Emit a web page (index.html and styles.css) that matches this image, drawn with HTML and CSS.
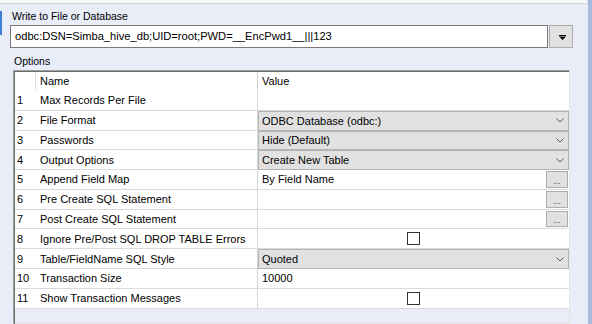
FILE: index.html
```html
<!DOCTYPE html>
<html lang="en">
<head>
    <meta charset="UTF-8">
    <title>Write to File or Database</title>
    <link rel="stylesheet" href="styles.css">
</head>
<body>
<div class="window">
    <div class="main">
        <div class="top-band"></div>

        <section class="field">
            <div class="caption">Write to File or Database</div>
            <div class="conn-row">
                <div class="conn-input">odbc:DSN=Simba_hive_db;UID=root;PWD=__EncPwd1__|||123</div>
                <div class="drop-btn">
                    <svg width="7" height="5" viewBox="0 0 7 5"><rect x="0" y="0" width="7" height="1" fill="#000"/><polygon points="0,1.5 7,1.5 3.5,5" fill="#000"/></svg>
                </div>
            </div>
        </section>

        <div class="caption options-caption">Options</div>

        <div class="grid">
            <div class="grid-body">
                <div class="grid-row head">
                    <div class="num"></div>
                    <div class="name">Name</div>
                    <div class="value">Value</div>
                </div>

                <div class="grid-row">
                    <div class="num">1</div>
                    <div class="name">Max Records Per File</div>
                    <div class="value"></div>
                </div>
                <div class="grid-row">
                    <div class="num">2</div>
                    <div class="name">File Format</div>
                    <div class="value select">ODBC Database (odbc:)
                        <svg class="chev" width="8" height="5" viewBox="0 0 8 5"><polyline points="0.5,0.5 4,4 7.5,0.5" fill="none" stroke="#555" stroke-width="1"/></svg>
                    </div>
                </div>
                <div class="grid-row">
                    <div class="num">3</div>
                    <div class="name">Passwords</div>
                    <div class="value select">Hide (Default)
                        <svg class="chev" width="8" height="5" viewBox="0 0 8 5"><polyline points="0.5,0.5 4,4 7.5,0.5" fill="none" stroke="#555" stroke-width="1"/></svg>
                    </div>
                </div>
                <div class="grid-row">
                    <div class="num">4</div>
                    <div class="name">Output Options</div>
                    <div class="value select">Create New Table
                        <svg class="chev" width="8" height="5" viewBox="0 0 8 5"><polyline points="0.5,0.5 4,4 7.5,0.5" fill="none" stroke="#555" stroke-width="1"/></svg>
                    </div>
                </div>
                <div class="grid-row">
                    <div class="num">5</div>
                    <div class="name">Append Field Map</div>
                    <div class="value">By Field Name<span class="dots">...</span></div>
                </div>
                <div class="grid-row">
                    <div class="num">6</div>
                    <div class="name">Pre Create SQL Statement</div>
                    <div class="value"><span class="dots">...</span></div>
                </div>
                <div class="grid-row">
                    <div class="num">7</div>
                    <div class="name">Post Create SQL Statement</div>
                    <div class="value"><span class="dots">...</span></div>
                </div>
                <div class="grid-row">
                    <div class="num">8</div>
                    <div class="name">Ignore Pre/Post SQL DROP TABLE Errors</div>
                    <div class="value check"><span class="box"></span></div>
                </div>
                <div class="grid-row">
                    <div class="num">9</div>
                    <div class="name">Table/FieldName SQL Style</div>
                    <div class="value select">Quoted
                        <svg class="chev" width="8" height="5" viewBox="0 0 8 5"><polyline points="0.5,0.5 4,4 7.5,0.5" fill="none" stroke="#555" stroke-width="1"/></svg>
                    </div>
                </div>
                <div class="grid-row">
                    <div class="num">10</div>
                    <div class="name">Transaction Size</div>
                    <div class="value">10000</div>
                </div>
                <div class="grid-row">
                    <div class="num">11</div>
                    <div class="name">Show Transaction Messages</div>
                    <div class="value check"><span class="box"></span></div>
                </div>
            </div>
        </div>
    </div>
    <div class="side-strip"></div>
</div>
</body>
</html>
```

FILE: styles.css
```css
/* General */
body {
    margin: 0;
    background: #e9edf8;
    font-family: "Liberation Sans", Arial, sans-serif;
    font-size: 10.5px;
    color: #000;
    overflow: hidden;
}

.window {
    display: flex;
    height: 324px;
}

.main {
    flex: 1;
    display: flex;
    flex-direction: column;
    min-width: 0;
}

.side-strip {
    width: 4px;
    background: #a9bbdd;
}

.top-band {
    height: 3px;
    background: #f9f9fb;
    border-bottom: 1px solid #d4d6da;
    border-right: 1px solid #d4d6da;
}

/* Connection field */
.field {
    position: relative;
    padding-left: 10px;
}

.field::before {
    content: "";
    position: absolute;
    left: 0;
    top: 7px;
    width: 2px;
    height: 24px;
    background: #3f7fd8;
}

.caption {
    line-height: 13px;
    padding-left: 2px;
    margin-top: 6px;
}

.conn-row {
    display: flex;
    gap: 1px;
    margin-top: 2px;
}

.conn-input {
    box-sizing: border-box;
    width: 538px;
    height: 23px;
    border: 1px solid #7a7a7a;
    background: #fff;
    padding-left: 4px;
    line-height: 21px;
    font-size: 11.15px;
    white-space: nowrap;
}

.drop-btn {
    box-sizing: border-box;
    width: 24px;
    height: 23px;
    border: 1px solid #adadad;
    background: #e1e1e1;
    display: flex;
    align-items: center;
    justify-content: center;
    padding: 2px 0 0 2px;
}

.options-caption {
    margin-top: 7px;
    padding-left: 14px;
}

/* Property grid */
.grid {
    margin: 2px 18px 0 13px;
    height: 260px;
    border: 1px solid;
    border-color: #a0a0a0 #e4e4e4 #e4e4e4 #a0a0a0;
    font-size: 11px;
}

.grid-body {
    height: 100%;
    border-top: 1px solid #6d6d6d;
    border-left: 1px solid #6d6d6d;
}

.grid-row {
    display: grid;
    grid-template-columns: 21px 222px 1fr;
    height: 19.8px;
    box-sizing: border-box;
    border-bottom: 1px solid #dadada;
    background: #fff;
}

.grid-row.head {
    height: 19px;
    border-bottom: none;
}

.grid-row > div {
    display: flex;
    align-items: center;
    white-space: nowrap;
    min-width: 0;
}

.num {
    padding-left: 2px;
}

.head .num {
    border-right: 1px solid #e2e2e2;
}

.name {
    padding-left: 4px;
    border-right: 1px solid #d6d6d6;
}

.value {
    padding-left: 4px;
    position: relative;
}

.value.select {
    background: #e1e1e1;
    box-shadow: inset 0 0 0 1px #b4b4b4;
    margin-bottom: -1px;
}

.chev {
    margin-left: auto;
    margin-right: 5px;
}

/* Ellipsis button */
.dots {
    position: absolute;
    right: 1px;
    top: 1px;
    bottom: 1px;
    width: 22px;
    box-sizing: border-box;
    border: 1px solid #adadad;
    background: #e1e1e1;
    color: #444;
    font-size: 9px;
    line-height: 9px;
    display: flex;
    align-items: flex-end;
    justify-content: center;
    padding-bottom: 1px;
}

/* Checkbox */
.value.check {
    justify-content: center;
    padding-left: 0;
}

.box {
    width: 13px;
    height: 13px;
    box-sizing: border-box;
    border: 1px solid #333;
    background: #fff;
}
```
